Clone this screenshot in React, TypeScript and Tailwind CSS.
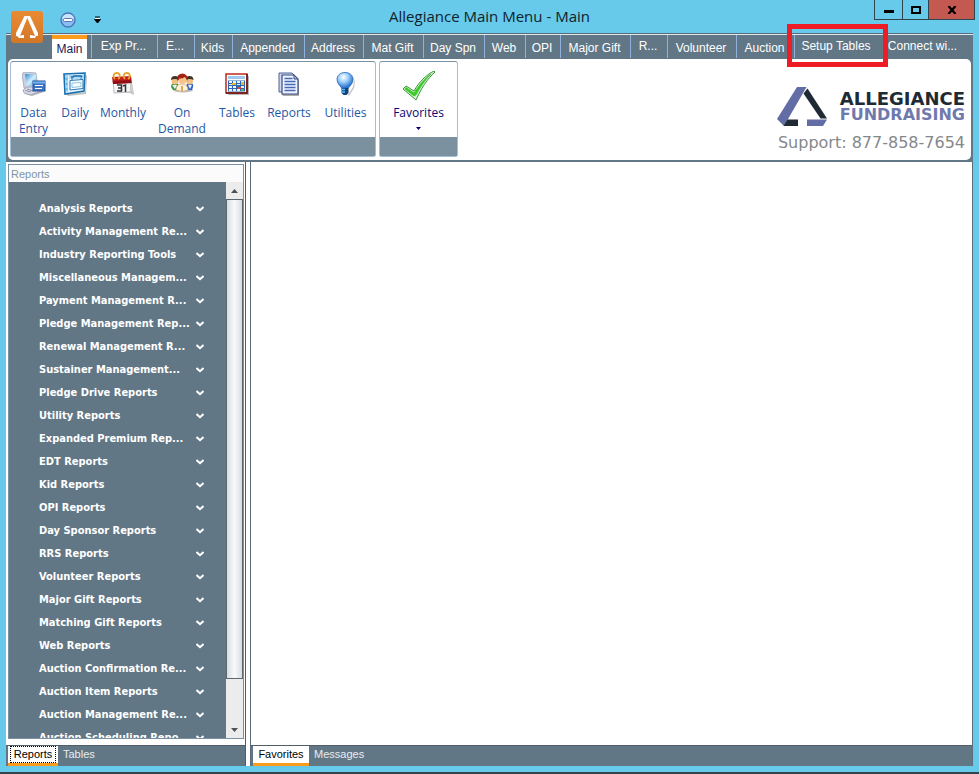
import type { ReactNode } from "react";
import clsx from "clsx";

type RibbonTab = { label: string; width: string; raised?: boolean; marked?: boolean };

const RIBBON_TABS: RibbonTab[] = [
  { label: "Exp Pr...", width: "w-[66px]", raised: true },
  { label: "E...", width: "w-[37px]", raised: true },
  { label: "Kids", width: "w-[38px]" },
  { label: "Appended", width: "w-[72px]" },
  { label: "Address", width: "w-[59px]" },
  { label: "Mat Gift", width: "w-[60px]" },
  { label: "Day Spn", width: "w-[61px]" },
  { label: "Web", width: "w-[41px]" },
  { label: "OPI", width: "w-[35px]" },
  { label: "Major Gift", width: "w-[70px]" },
  { label: "R...", width: "w-[37px]", raised: true },
  { label: "Volunteer", width: "w-[69px]" },
  { label: "Auction", width: "w-[58px]" },
  { label: "Setup Tables", width: "w-[85px]", raised: true, marked: true },
  { label: "Connect wi...", width: "w-[88px]", raised: true },
];

const REPORT_GROUPS = [
  "Analysis Reports",
  "Activity Management Re...",
  "Industry Reporting Tools",
  "Miscellaneous Managem...",
  "Payment Management R...",
  "Pledge Management Rep...",
  "Renewal Management R...",
  "Sustainer Management...",
  "Pledge Drive Reports",
  "Utility Reports",
  "Expanded Premium Rep...",
  "EDT Reports",
  "Kid Reports",
  "OPI Reports",
  "Day Sponsor Reports",
  "RRS Reports",
  "Volunteer Reports",
  "Major Gift Reports",
  "Matching Gift Reports",
  "Web Reports",
  "Auction Confirmation Re...",
  "Auction Item Reports",
  "Auction Management Re...",
  "Auction Scheduling Repo...",
];

function DataEntryIcon() {
  return (
    <svg width="24" height="24" viewBox="0 0 24 24" aria-hidden="true">
      <defs>
        <linearGradient id="screen" x1="0" y1="0" x2="1" y2="1">
          <stop offset="0" stopColor="#2d86cf" />
          <stop offset="0.5" stopColor="#d2effb" />
          <stop offset="1" stopColor="#4a9bdc" />
        </linearGradient>
      </defs>
      <path d="M3 22l15-4 4 2-12 4z" fill="#777" opacity="0.5" />
      <path d="M0 2l2-2 12 1 2 14-12 2-2-1z" fill="#c9d0df" stroke="#8992a8" strokeWidth="0.600" />
      <path d="M3 2l11 0.500 1 11-10 1z" fill="url(#screen)" />
      <path d="M1 18l4-3 12 0 2 4-10 4-7-2z" fill="#d9dce8" stroke="#7b8296" strokeWidth="0.600" />
      <path d="M3 18.500l6 1.500M5 17l6 2" stroke="#8b90a5" />
      <rect x="11" y="9" width="12" height="10" fill="#3e74c2" stroke="#244f9c" />
      <path d="M11 10.500h12" stroke="#75b0ec" strokeWidth="2" />
      <path d="M13 13.500h8M13 16.500h7" stroke="#fff" />
    </svg>
  );
}

function DailyIcon() {
  return (
    <svg width="24" height="24" viewBox="0 0 24 24" aria-hidden="true">
      <path d="M3 22l19-2 1-17 1 1-1 18-18 2z" fill="#999" opacity="0.6" />
      <path d="M1 2l21-1-1 18-19 3z" fill="#e9f6ff" stroke="#176fae" strokeWidth="1.600" />
      <path d="M2 3l3 0 0 17-2 0z" fill="#9fd3f3" />
      <path d="M6 3l15-0.500v4L6 7z" fill="#a8d6f2" />
      <path d="M8 5h2l1-1h7l1 1" fill="none" stroke="#1b6ca9" strokeWidth="1.600" />
      <path d="M7 8.500l13-1v9l-13 1.500z" fill="#fafdff" stroke="#2878b6" />
      <path d="M9 8v-2M18 7.500v-2" stroke="#2878b6" />
      <path d="M9 11l9-0.500v4L9 15.500z" fill="none" stroke="#8ec4e7" />
      <path d="M2.500 7h2M2.500 12h2M2.500 17h2" stroke="#3f8fc6" />
    </svg>
  );
}

function MonthlyIcon() {
  return (
    <svg width="24" height="24" viewBox="0 0 24 24" aria-hidden="true">
      <path d="M4 21l15 0 4 2-2-13z" fill="#9b9b9b" opacity="0.6" />
      <path d="M2 8h17l1 12-17 1z" fill="#f4f4f4" stroke="#bcbcbc" />
      <path d="M19 8l4 13-3-2-1-8z" fill="#d0d0d0" />
      <path d="M1 5l19-1 1 7-19 1z" fill="#c51d20" />
      <path d="M2 9l18-1v3L2 12z" fill="#8f0f14" />
      <path d="M4 7c-3-3-1-6 2-6s4 4 1 6M14 7c-3-3-1-6 2-6s4 4 1 6" fill="none" stroke="#e4a72d" strokeWidth="1.800" />
      <path d="M6 13h4.500v6H6M7 16h3M12 14l2.500-1v7" fill="none" stroke="#30343a" strokeWidth="1.500" />
    </svg>
  );
}

function OnDemandIcon() {
  return (
    <svg width="24" height="24" viewBox="0 0 24 24" aria-hidden="true">
      <ellipse cx="13" cy="18" rx="10" ry="2.500" fill="#777" opacity="0.5" />
      <path d="M1 15q0-4 4-4t4 4v3l-6 0z" fill="#3f9a3b" />
      <path d="M16 15q0-4 4-4t3 4l-1 3h-6z" fill="#2d62c8" />
      <path d="M2 13l3 4 2-4M18 13l2 4 2-4" fill="#e8f2fb" />
      <circle cx="5" cy="9" r="3.500" fill="#f2bf83" />
      <circle cx="19.500" cy="9" r="3.500" fill="#f2bf83" />
      <path d="M1 8q0-4 4-4t4 4q-4-2-8 0zM15.500 8q0-4 4-4t4 4q-4-2-8 0z" fill="#3f3328" />
      <path d="M6 18q0-6 6-6t6 6q-6 3-12 0z" fill="#fbf1dc" stroke="#c79a50" strokeWidth="0.600" />
      <path d="M12 14v5" stroke="#d58a22" strokeWidth="1.400" />
      <circle cx="12.500" cy="8" r="4" fill="#f7c58b" />
      <path d="M7.500 9q-2-7 5-7.500 6 0.500 5 7.500-1-3-3-4-2 2-5 1.500z" fill="#a32417" />
    </svg>
  );
}

function TablesIcon() {
  return (
    <svg width="24" height="24" viewBox="0 0 24 24" aria-hidden="true">
      <path d="M3 4h21v19H3z" fill="#8b8b8b" opacity="0.6" />
      <path d="M1 2h21v19H1z" fill="#fff" stroke="#c0281a" strokeWidth="1.500" />
      <path d="M22 2v19H1" fill="none" stroke="#651611" strokeWidth="1.500" />
      <path d="M3 4h17v3H3z" fill="#9ecaf2" />
      <path d="M3 8.500h17v11H3z" fill="#2b65b4" />
      <path d="M4 9h3v2H4zM8 9h3v2H8zM12 9h3v2h-3zM16 9h3v2h-3zM4 12h3v1H4zM12 12h3v1h-3zM4 14h3v2H4zM8 14h3v2H8zM16 14h3v2h-3zM4 17h3v2H4zM8 17h3v2H8zM12 17h3v2h-3z" fill="#eaf4fe" />
      <path d="M7 11h4v2H7z" fill="#e6b33a" />
      <path d="M16 10h3v3h-3z" fill="#d8c34a" />
      <path d="M13 15h3v2h-3z" fill="#d04a36" />
      <path d="M16 17h3v2h-3z" fill="#69b54f" />
    </svg>
  );
}

function ReportsIcon() {
  return (
    <svg width="24" height="24" viewBox="0 0 24 24" aria-hidden="true">
      <path d="M5 22h15l1-15 1 1v16H6z" fill="#777" opacity="0.6" />
      <path d="M2 1h13l2 2v17H2z" fill="#cfd9f2" stroke="#4e5f92" />
      <path d="M5 3h12l4 4v15H5z" fill="#eef3ff" stroke="#394b7f" strokeWidth="1.200" />
      <path d="M17 3v4h4z" fill="#aebce2" stroke="#394b7f" />
      <path d="M7.500 6.500h8M7.500 9.500h11M7.500 12.500h11M7.500 15.500h11M7.500 18.500h11" stroke="#4668b6" strokeWidth="1.300" />
    </svg>
  );
}

function UtilitiesIcon() {
  return (
    <svg width="24" height="24" viewBox="0 0 24 24" aria-hidden="true">
      <defs>
        <radialGradient id="bulb" cx="0.4" cy="0.3" r="0.7">
          <stop offset="0" stopColor="#ffffff" />
          <stop offset="0.4" stopColor="#a7d4fb" />
          <stop offset="1" stopColor="#1964c8" />
        </radialGradient>
      </defs>
      <path d="M14 23l5-8 1-6-1-4 2 5-1 6-5 8z" fill="#888" opacity="0.5" />
      <path d="M11 0.500c-5 0-8 3-8 7s3 6 5 9h6c2-3 5-5 5-9s-3-7-8-7z" fill="url(#bulb)" stroke="#2a68b5" strokeWidth="0.800" />
      <path d="M7.500 16h7v5l-2 2h-3l-2-2z" fill="#174078" />
      <path d="M8 17.500h3M8 20h3" stroke="#55c1fa" strokeWidth="1.600" />
    </svg>
  );
}

function CheckIcon() {
  return (
    <svg width="34" height="30" viewBox="0 0 34 30" aria-hidden="true">
      <path d="M1 18l3-3 8 5C17 11 24 4 32 0l1 1c-8 7-14 17-19 28z" fill="#d2f3ca" stroke="#369b36" />
      <path d="M3 18l1-1.500 8 5.500C18 13 23 7 29 3c-7 7-11 14-15 21l-2 1z" fill="#35d51c" stroke="#43a93c" strokeWidth="0.600" />
    </svg>
  );
}

function RibbonButton({ label, width, children }: { label: string; width: string; children: ReactNode }) {
  return (
    <button type="button" className={clsx("flex flex-col items-center pt-[9px] text-[12px] leading-4 text-[#2457a5]", width)}>
      <span className="flex h-[34px] items-start pt-px">{children}</span>
      <span>{label}</span>
    </button>
  );
}

function RibbonGroup({ children }: { children: ReactNode }) {
  return (
    <div className="flex flex-col rounded-[3px] border border-[#a3bdd4] border-t-[#7891a2]">
      <div className="flex h-[75px]">{children}</div>
      <div className="h-[19px] bg-[#7b919f]" />
    </div>
  );
}

function TitleBar() {
  return (
    <header className="relative flex h-[33px] shrink-0 items-start justify-end">
      <div className="absolute left-[60px] top-3 flex items-center gap-[18px]">
        <button type="button" aria-label="Collapse">
          <svg width="16" height="16" viewBox="0 0 16 16">
            <circle cx="8" cy="8" r="7" fill="#86bdf3" stroke="#4f77bc" strokeWidth="1.400" />
            <path d="M2 7a6 5 0 0 1 12 0z" fill="#cbe5ff" />
            <rect x="3.500" y="6.500" width="9" height="3" rx="1" fill="#fff" stroke="#5d78ae" />
          </svg>
        </button>
        <button type="button" aria-label="Customize toolbar">
          <svg width="7" height="8" viewBox="0 0 7 8">
            <path d="M1 1h5M0.500 3.500h6L3.500 7z" fill="#000" stroke="#000" />
            <path d="M1 2.500h5" stroke="#fff" />
          </svg>
        </button>
      </div>
      <h1 className="absolute inset-x-0 top-1.5 text-center font-['Open_Sans'] text-[15px] leading-5 text-[#10222b]">
        Allegiance Main Menu - Main
      </h1>
      <div className="relative mr-1 flex h-5 border border-t-0 border-[#30444e]">
        <button type="button" aria-label="Minimize" className="flex w-7 items-center justify-center border-r border-[#30444e]">
          <span className="mt-1 h-[3px] w-2.5 bg-black" />
        </button>
        <button type="button" aria-label="Maximize" className="flex w-[26px] items-center justify-center border-r border-[#30444e]">
          <span className="h-2 w-2.5 border-2 border-black" />
        </button>
        <button type="button" aria-label="Close" className="flex w-[45px] items-center justify-center bg-[#c35950]">
          <svg width="10" height="8" viewBox="0 0 10 8">
            <path d="M1.500 0l7 8M8.500 0l-7 8" stroke="#000" strokeWidth="2.200" />
          </svg>
        </button>
      </div>
    </header>
  );
}

function RibbonTabs() {
  return (
    <nav className="flex h-6 pl-[46px] text-[12px] leading-4 text-white">
      <button type="button" className="mr-1 w-[35px] border-t-4 border-[#fb9c1c] bg-white text-center text-[#1d1856]">
        Main
      </button>
      {RIBBON_TABS.map((tab) => (
        <button
          key={tab.label}
          type="button"
          className={clsx(
            "relative h-[23px] shrink-0 whitespace-nowrap border-l pr-0.5 text-center",
            tab.label === "Connect wi..." ? "border-transparent" : "border-[#8eb2dc]",
            tab.raised ? "pb-px" : "pt-[3px]",
            tab.width
          )}
        >
          {tab.label}
          {tab.marked && <span className="absolute -bottom-[9px] -left-2 -right-[9px] -top-[11px] z-10 border-5 border-[#ee1c24]" />}
        </button>
      ))}
    </nav>
  );
}

function BrandLogo() {
  return (
    <div className="mr-1.5 mt-6 flex flex-col items-end font-['DejaVu_Sans']">
      <div className="flex gap-[13px]">
        <svg width="50" height="44" viewBox="0 0 50 44" aria-hidden="true">
          <path d="M20 4h9.500L7 43 0 36z" fill="#626da5" />
          <path d="M30.500 5.500L50 35.500h-6.500L26.500 10.500z" fill="#202a35" />
          <path d="M10.500 36.500h10.500v6.500H6.500z" fill="#202a35" />
          <path d="M30 36.500h20L46 43H30z" fill="#626da5" />
        </svg>
        <div className="pt-2 text-right font-bold">
          <p className="text-[18px] leading-4 text-[#202a35]">ALLEGIANCE</p>
          <p className="text-[16px] leading-4 text-[#7079ad]">FUNDRAISING</p>
        </div>
      </div>
      <p className="mt-2 text-[16px] leading-4 text-[#85888b]">Support: 877-858-7654</p>
    </div>
  );
}

function Ribbon() {
  return (
    <section className="mx-0.5 flex h-[101px] items-start justify-between rounded-[5px] bg-white">
      <div className="flex gap-[3px] pl-0.5 pt-0.5 font-['Open_Sans']">
        <RibbonGroup>
          <RibbonButton label="Data Entry" width="w-[45px]"><DataEntryIcon /></RibbonButton>
          <RibbonButton label="Daily" width="w-[38px]"><DailyIcon /></RibbonButton>
          <RibbonButton label="Monthly" width="w-[58px]"><MonthlyIcon /></RibbonButton>
          <RibbonButton label="On Demand" width="w-[60px]"><OnDemandIcon /></RibbonButton>
          <RibbonButton label="Tables" width="w-[50px]"><TablesIcon /></RibbonButton>
          <RibbonButton label="Reports" width="w-[54px]"><ReportsIcon /></RibbonButton>
          <RibbonButton label="Utilities" width="w-[59px]"><UtilitiesIcon /></RibbonButton>
        </RibbonGroup>
        <RibbonGroup>
          <button type="button" className="flex w-[77px] flex-col items-center pt-[9px] text-[12px] leading-4 text-[#080879]">
            <span className="h-[34px]"><CheckIcon /></span>
            <span>Favorites</span>
            <svg className="mt-1.5" width="5" height="3" viewBox="0 0 5 3">
              <path d="M0 0h5L2.500 3z" fill="#000080" />
            </svg>
          </button>
        </RibbonGroup>
      </div>
      <BrandLogo />
    </section>
  );
}

function BottomTabs({ tabs, focused }: { tabs: [string, string]; focused?: boolean }) {
  return (
    <div className="flex h-[21px] shrink-0 border-t border-[#4f5e69] bg-[#617786] pl-0.5 text-[11px] leading-[17px]">
      <button type="button" className={clsx("border-b-3 border-[#fb9c1c] bg-white text-black", focused ? "w-[50px]" : "w-[56px]")}>
        <span className={clsx("block", focused && "mx-0.5 outline-1 -outline-offset-1 outline-dotted outline-black")}>{tabs[0]}</span>
      </button>
      <button type="button" className="px-[5px] pb-[3px] text-[#e8eef2]">{tabs[1]}</button>
    </div>
  );
}

function Scrollbar() {
  return (
    <div className="flex w-[17px] shrink-0 flex-col bg-[#ececec]">
      <button type="button" aria-label="Scroll up" className="flex h-[17px] items-center justify-center">
        <svg width="7" height="4" viewBox="0 0 7 4"><path d="M0 4h7L3.500 0z" fill="#505050" /></svg>
      </button>
      <div className="min-h-0 flex-1">
        <div className="h-[92%] border border-[#5d666c] bg-linear-to-r from-[#d9dde2] via-[#f8f9fa] to-[#d9dde2]" />
      </div>
      <button type="button" aria-label="Scroll down" className="flex h-[17px] items-center justify-center">
        <svg width="7" height="4" viewBox="0 0 7 4"><path d="M0 0h7L3.500 4z" fill="#505050" /></svg>
      </button>
    </div>
  );
}

function ReportsPanel() {
  return (
    <aside className="flex w-60 shrink-0 flex-col border-r border-[#4f5e69] bg-white">
      <div className="mb-1.5 ml-0.5 mr-px mt-0.5 flex min-h-0 flex-1 flex-col border border-[#7b91a1]">
        <h2 className="h-[17px] shrink-0 bg-[#fbfbfb] pl-0.5 text-[11px] leading-[18px] text-[#8094a3]">Reports</h2>
        <div className="flex min-h-0 flex-1">
          <ul className="min-w-0 flex-1 overflow-hidden bg-[#617786] pt-4 font-['DejaVu_Sans_Condensed'] text-[11px] font-bold text-white">
            {REPORT_GROUPS.map((name) => (
              <li key={name}>
                <button type="button" className="flex h-[23px] w-full items-center justify-between whitespace-nowrap pl-[30px] pr-[22px]">
                  {name}
                  <svg className="mb-0.5" width="8" height="6" viewBox="0 0 8 6" aria-hidden="true">
                    <path d="M0.500 1L4 4.200 7.500 1" fill="none" stroke="#fff" strokeWidth="2" />
                  </svg>
                </button>
              </li>
            ))}
          </ul>
          <Scrollbar />
        </div>
      </div>
      <BottomTabs tabs={["Reports", "Tables"]} focused />
    </aside>
  );
}

export default function App() {
  return (
    <div className="relative flex h-screen flex-col border-b-2 border-[#35424a] bg-[#67caea] font-['Liberation_Sans']">
      <TitleBar />
      <div className="mx-1.5 flex min-h-0 flex-1 flex-col">
        <div className="border-t border-[#596b7a] bg-[#617786] pb-0.5">
          <div className="h-px bg-[#dfe9f1]" />
          <RibbonTabs />
          <Ribbon />
        </div>
        <main className="flex min-h-0 flex-1 bg-white">
          <ReportsPanel />
          <section className="ml-1 flex min-w-0 flex-1 flex-col border-x border-[#5c6c78]">
            <div className="flex-1 bg-white" />
            <BottomTabs tabs={["Favorites", "Messages"]} />
          </section>
        </main>
        <div className="h-1.5 shrink-0" />
      </div>
      <button type="button" aria-label="Application menu" className="absolute left-[11px] top-[11px] z-10 rounded-[3px] bg-linear-to-b from-[#e98b34] to-[#d27727]">
        <svg width="32" height="32" viewBox="0 0 32 32">
          <path d="M13.500 5h3.500L9 25l-4 0v-3z" fill="#fff" />
          <path d="M15.500 5h3.500l8 17v3l-3 0z" fill="#fff" />
          <path d="M6 25l7-1v3l-5 0zM19 24l6 1-1 2h-5z" fill="#fff" />
        </svg>
      </button>
    </div>
  );
}
